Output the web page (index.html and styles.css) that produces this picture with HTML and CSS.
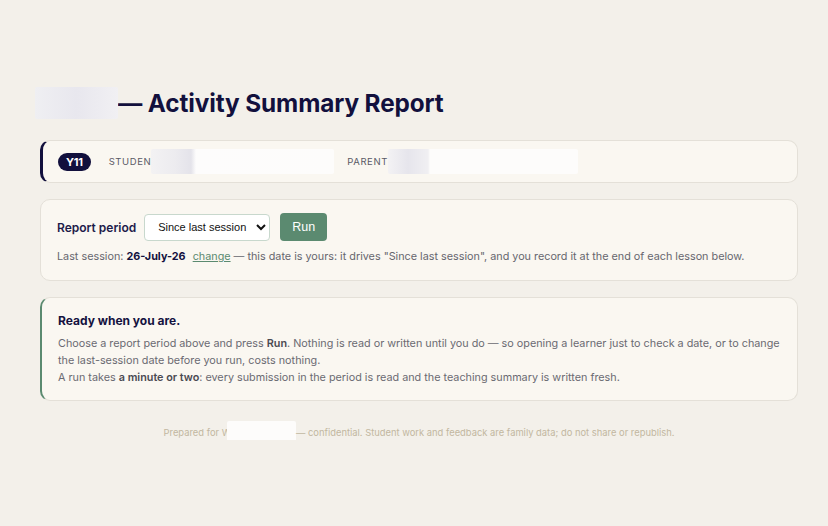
FILE: index.html
```html
<!DOCTYPE html>
<html lang="en">
<head>
<meta charset="utf-8">
<title>Activity Summary Report</title>
<link rel="stylesheet" href="styles.css">
</head>
<body>
<main class="page">
  <h1 class="title"><span class="redact redact-title"></span>— Activity Summary Report</h1>

  <section class="card card-id">
    <span class="badge">Y11</span>
    <span class="label">STUDEN</span><span class="redact redact-student"></span>
    <span class="label label-parent">PARENT</span><span class="redact redact-parent"></span>
  </section>

  <section class="card card-period">
    <div class="period-row">
      <label class="period-label" for="period">Report period</label>
      <select id="period" class="period-select">
        <option>Since last session</option>
      </select>
      <button class="run-btn" type="button">Run</button>
    </div>
    <p class="last-session">Last session: <strong>26-July-26</strong> <a href="#" class="change">change</a> — this date is yours: it drives "Since last session", and you record it at the end of each lesson below.</p>
  </section>

  <section class="card card-ready">
    <h2 class="ready-title">Ready when you are.</h2>
    <p class="ready-text">Choose a report period above and press <strong>Run</strong>. Nothing is read or written until you do — so opening a learner just to check a date, or to change the last-session date before you run, costs nothing.<br>A run takes <strong>a minute or two</strong>: every submission in the period is read and the teaching summary is written fresh.</p>
  </section>

  <p class="footer">Prepared for W<span class="redact redact-footer"></span>— confidential. Student work and feedback are family data; do not share or republish.</p>
</main>
</body>
</html>
```

FILE: styles.css
```css
* { box-sizing: border-box; }
html, body { margin: 0; padding: 0; }
body {
  background: #f3f0ea;
  font-family: Inter, "Noto Sans", sans-serif;
  color: #14123f;
}
.page {
  width: 758px;
  margin: 0 0 0 40px;
  padding-top: 87px;
}
.title {
  margin: 0 0 21px -5px;
  font-size: 24.3px;
  line-height: 32px;
  font-weight: 700;
  color: #12103d;
  display: flex;
  align-items: center;
  letter-spacing: -0.1px;
}
.redact {
  display: inline-block;
  border-radius: 2px;
}
.redact-title {
  width: 83px;
  height: 32px;
  background: linear-gradient(90deg, #efeff2, #e8e7ee 50%, #f1f0f3);
  filter: blur(0.6px);
}
.card {
  background: #faf7f1;
  border: 1px solid #e4e0d8;
  border-radius: 10px;
  margin-bottom: 16px;
}
.card-id {
  height: 43px;
  border-left: 3px solid #12103d;
  display: flex;
  align-items: center;
  padding-left: 15px;
}
.badge {
  background: #12103d;
  color: #fff;
  font-weight: 700;
  font-size: 11px;
  height: 18px;
  line-height: 18px;
  padding: 0 8px;
  border-radius: 9px;
  letter-spacing: -0.3px;
  margin-right: 18px;
}
.label {
  font-size: 9.5px;
  letter-spacing: 0.6px;
  color: #5a5a66;
}
.label-parent { margin-left: 13px; }
.redact-student {
  width: 183px; height: 25px;
  background: linear-gradient(90deg, #f3f2f3 0px, #ecebef 25px, #e4e3ea 40px, #fdfcfc 45px, #fdfcfb 183px);
}
.redact-parent {
  width: 190px; height: 25px;
  background: linear-gradient(90deg, #f3f2f4 0px, #e6e5ec 20px, #f0eff2 40px, #fdfcfb 42px, #fdfcfb 190px);
}
.card-period {
  padding: 13px 16px 15px 16px;
}
.period-row {
  display: flex;
  align-items: center;
}
.period-label {
  font-size: 12px;
  font-weight: 600;
  color: #1d1b4a;
  margin-right: 8px;
}
.period-select {
  height: 27px;
  width: 126px;
  font-family: "Liberation Sans", Arial, sans-serif;
  font-size: 11px;
  color: #111;
  background: #fff;
  border: 1px solid #c8d8cd;
  border-radius: 4px;
  padding: 0 2px 0 9px;
  margin-right: 10px;
}
.run-btn {
  height: 28px;
  width: 47px;
  background: #5b8a70;
  color: #fff;
  border: none;
  border-radius: 4px;
  font-family: "Liberation Sans", Arial, sans-serif;
  font-size: 12.5px;
  font-weight: 500;
}
.last-session {
  margin: 8px 0 0 0;
  font-size: 10.8px;
  line-height: 16px;
  color: #66666e;
}
.last-session strong {
  color: #14123f;
  font-weight: 700;
  margin-right: 4px;
}
.change {
  color: #5b8a70;
  text-decoration: underline;
}
.card-ready {
  border-left: 2px solid #5b8a70;
  padding: 15px 16px 14px 16px;
}
.ready-title {
  margin: 0 0 6px 0;
  font-size: 12px;
  line-height: 16px;
  font-weight: 700;
  color: #14123f;
}
.ready-text {
  margin: 0;
  font-size: 10.8px;
  line-height: 17px;
  color: #6a6a72;
}
.ready-text strong {
  color: #4a4a52;
  font-weight: 600;
}
.footer {
  margin: 25px 0 0 0;
  text-align: center;
  font-size: 9.4px;
  line-height: 14px;
  color: #c2b7a0;
}
.redact-footer {
  width: 69px;
  height: 23px;
  margin: -5px 0 -4px -4px;
  vertical-align: middle;
  background: #fdfcfb;
}
```
